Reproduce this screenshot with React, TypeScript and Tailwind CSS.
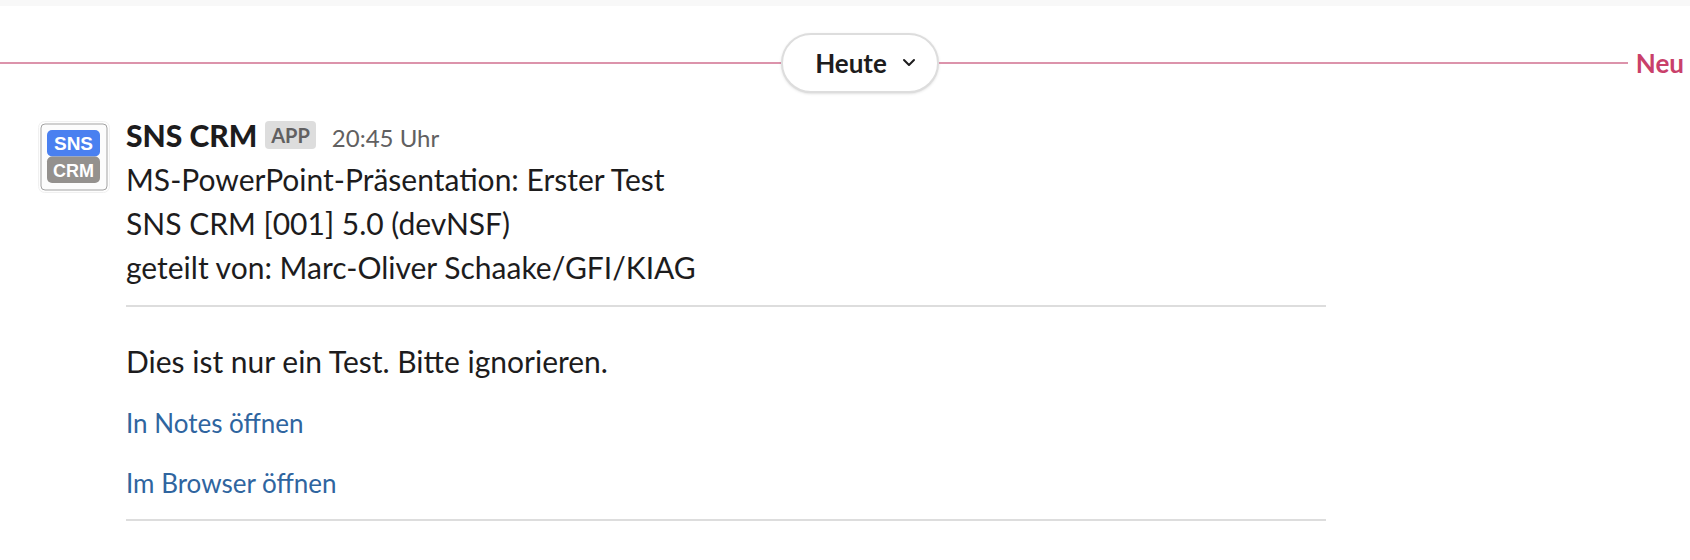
// src/App.tsx
import React from "react";

const lines = [
  "MS-PowerPoint-Präsentation: Erster Test",
  "SNS CRM [001] 5.0 (devNSF)",
  "geteilt von: Marc-Oliver Schaake/GFI/KIAG",
];

const links = ["In Notes öffnen", "Im Browser öffnen"];

const DayDivider: React.FC = () => {
  return (
    <div className="flex items-center pt-[27px] pr-[6px]">
      <div className="h-[2px] shrink grow basis-9 bg-[#dc93ab]" />
      <button
        type="button"
        className="flex h-[60px] items-center gap-[14px] rounded-full border-2 border-[#dddddd] bg-white pr-5 pl-8 text-[26px] font-bold shadow-sm"
      >
        Heute
        <svg
          aria-hidden="true"
          viewBox="0 0 16 16"
          className="h-4 w-4"
          fill="none"
          stroke="currentColor"
          strokeWidth="2"
          strokeLinecap="round"
          strokeLinejoin="round"
        >
          <path d="M3 5 8 10 13 5" />
        </svg>
      </button>
      <div className="flex flex-1 items-center gap-2">
        <div className="h-[2px] flex-1 bg-[#dc93ab]" />
        <span className="text-[26px] font-bold text-[#c9406a]">Neu</span>
      </div>
    </div>
  );
};

const Avatar: React.FC = () => {
  return (
    <svg role="img" aria-label="SNS CRM" viewBox="0 0 72 72" className="mt-2 h-[72px] w-[72px] shrink-0">
      <rect x="0.5" y="0.5" width="71" height="71" rx="6" fill="#fdfdfd" stroke="#f0f0f0" />
      <rect x="3" y="3" width="66" height="66" rx="4" fill="#fcfcfc" stroke="#a3a3a3" />
      <rect x="9" y="9" width="53" height="26.5" rx="5" fill="#4a80f0" />
      <rect x="9" y="35.5" width="53" height="26.5" rx="5" fill="#94918e" />
      <g fill="#fff" fontFamily="'Liberation Sans', Arial, sans-serif" fontWeight="700" textAnchor="middle">
        <text x="35.5" y="29" fontSize="19">
          SNS
        </text>
        <text x="35.5" y="55.5" fontSize="18">
          CRM
        </text>
      </g>
    </svg>
  );
};

const Message: React.FC = () => {
  return (
    <article className="flex gap-4 pt-5 pl-[38px] text-[30px] leading-[44px]">
      <Avatar />
      <div className="min-w-0 flex-1">
        <header className="flex h-11 items-baseline">
          <h2 className="font-black">SNS CRM</h2>
          <span className="mt-2 ml-2 self-start rounded-sm bg-[#dddddd] px-[6px] text-[20px] leading-7 font-bold text-[#616061]">
            APP
          </span>
          <time dateTime="20:45" className="ml-4 text-[24px] text-[#616061]">
            20:45 Uhr
          </time>
        </header>

        {/* Message body */}
        <div className="max-w-[1200px]">
          {lines.map((line) => (
            <p key={line}>{line}</p>
          ))}
          <hr className="mt-4 mb-8 border-t-2 border-[#dddddd]" />
          <p>Dies ist nur ein Test. Bitte ignorieren.</p>
          <div className="mt-[22px] flex flex-col items-start gap-6 text-[26px] leading-9 text-[#2f659f]">
            {links.map((label) => (
              <a key={label} href="#">
                {label}
              </a>
            ))}
          </div>
          <hr className="mt-[18px] border-t-2 border-[#dddddd]" />
        </div>
      </div>
    </article>
  );
};

export default function App() {
  return (
    <main className="min-h-screen bg-white font-[Lato,sans-serif] text-[#1d1c1d]">
      <div className="h-[6px] bg-[#f8f8f8]" />
      <DayDivider />
      <Message />
    </main>
  );
}
